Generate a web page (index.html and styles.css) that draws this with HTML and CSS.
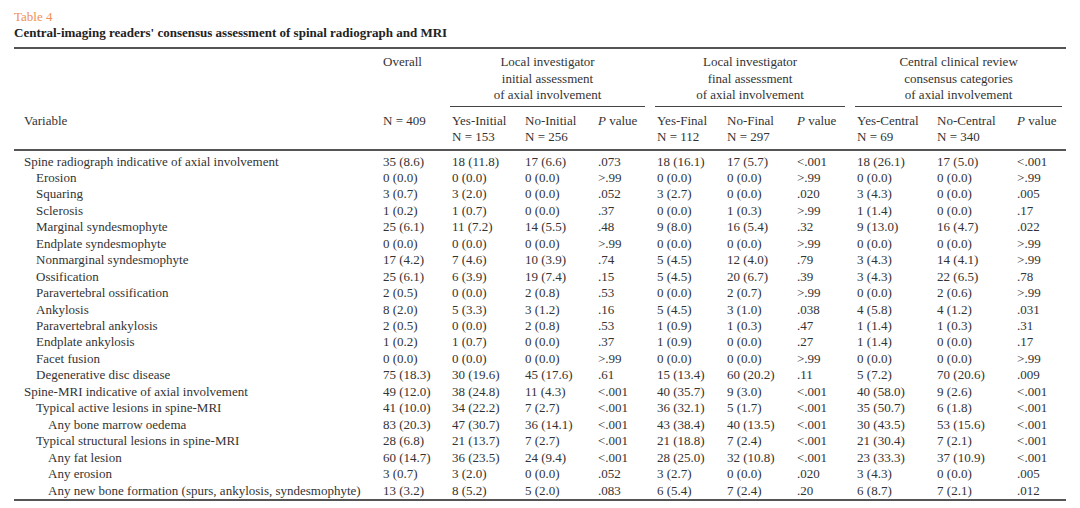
FILE: index.html
```html
<!DOCTYPE html>
<html lang="en">
<head>
<meta charset="utf-8">
<title>Table 4</title>
<link rel="stylesheet" href="styles.css">
</head>
<body>
<div class="caption">
  <div class="label">Table 4</div>
  <div class="title">Central-imaging readers' consensus assessment of spinal radiograph and MRI</div>
</div>
<table class="data">
  <colgroup>
    <col class="c-var"><col class="c-all">
    <col class="c-yi"><col class="c-ni"><col class="c-pi">
    <col class="c-yf"><col class="c-nf"><col class="c-pf">
    <col class="c-yc"><col class="c-nc"><col class="c-pc">
  </colgroup>
  <thead>
    <tr class="h1">
      <th></th>
      <th>Overall</th>
      <th colspan="3" class="grp"><div class="group g1">Local investigator<br>initial assessment<br>of axial involvement</div></th>
      <th colspan="3" class="grp"><div class="group g2">Local investigator<br>final assessment<br>of axial involvement</div></th>
      <th colspan="3" class="grp"><div class="group g3">Central clinical review<br>consensus categories<br>of axial involvement</div></th>
    </tr>
    <tr class="h2">
      <th>Variable</th>
      <th>N = 409</th>
      <th>Yes-Initial<br>N = 153</th>
      <th>No-Initial<br>N = 256</th>
      <th><i>P</i> value</th>
      <th>Yes-Final<br>N = 112</th>
      <th>No-Final<br>N = 297</th>
      <th><i>P</i> value</th>
      <th>Yes-Central<br>N = 69</th>
      <th>No-Central<br>N = 340</th>
      <th><i>P</i> value</th>
    </tr>
  </thead>
  <tbody>
    <tr><td>Spine radiograph indicative of axial involvement</td><td>35 (8.6)</td><td>18 (11.8)</td><td>17 (6.6)</td><td>.073</td><td>18 (16.1)</td><td>17 (5.7)</td><td>&lt;.001</td><td>18 (26.1)</td><td>17 (5.0)</td><td>&lt;.001</td></tr>
    <tr><td class="l1">Erosion</td><td>0 (0.0)</td><td>0 (0.0)</td><td>0 (0.0)</td><td>&gt;.99</td><td>0 (0.0)</td><td>0 (0.0)</td><td>&gt;.99</td><td>0 (0.0)</td><td>0 (0.0)</td><td>&gt;.99</td></tr>
    <tr><td class="l1">Squaring</td><td>3 (0.7)</td><td>3 (2.0)</td><td>0 (0.0)</td><td>.052</td><td>3 (2.7)</td><td>0 (0.0)</td><td>.020</td><td>3 (4.3)</td><td>0 (0.0)</td><td>.005</td></tr>
    <tr><td class="l1">Sclerosis</td><td>1 (0.2)</td><td>1 (0.7)</td><td>0 (0.0)</td><td>.37</td><td>0 (0.0)</td><td>1 (0.3)</td><td>&gt;.99</td><td>1 (1.4)</td><td>0 (0.0)</td><td>.17</td></tr>
    <tr><td class="l1">Marginal syndesmophyte</td><td>25 (6.1)</td><td>11 (7.2)</td><td>14 (5.5)</td><td>.48</td><td>9 (8.0)</td><td>16 (5.4)</td><td>.32</td><td>9 (13.0)</td><td>16 (4.7)</td><td>.022</td></tr>
    <tr><td class="l1">Endplate syndesmophyte</td><td>0 (0.0)</td><td>0 (0.0)</td><td>0 (0.0)</td><td>&gt;.99</td><td>0 (0.0)</td><td>0 (0.0)</td><td>&gt;.99</td><td>0 (0.0)</td><td>0 (0.0)</td><td>&gt;.99</td></tr>
    <tr><td class="l1">Nonmarginal syndesmophyte</td><td>17 (4.2)</td><td>7 (4.6)</td><td>10 (3.9)</td><td>.74</td><td>5 (4.5)</td><td>12 (4.0)</td><td>.79</td><td>3 (4.3)</td><td>14 (4.1)</td><td>&gt;.99</td></tr>
    <tr><td class="l1">Ossification</td><td>25 (6.1)</td><td>6 (3.9)</td><td>19 (7.4)</td><td>.15</td><td>5 (4.5)</td><td>20 (6.7)</td><td>.39</td><td>3 (4.3)</td><td>22 (6.5)</td><td>.78</td></tr>
    <tr><td class="l1">Paravertebral ossification</td><td>2 (0.5)</td><td>0 (0.0)</td><td>2 (0.8)</td><td>.53</td><td>0 (0.0)</td><td>2 (0.7)</td><td>&gt;.99</td><td>0 (0.0)</td><td>2 (0.6)</td><td>&gt;.99</td></tr>
    <tr><td class="l1">Ankylosis</td><td>8 (2.0)</td><td>5 (3.3)</td><td>3 (1.2)</td><td>.16</td><td>5 (4.5)</td><td>3 (1.0)</td><td>.038</td><td>4 (5.8)</td><td>4 (1.2)</td><td>.031</td></tr>
    <tr><td class="l1">Paravertebral ankylosis</td><td>2 (0.5)</td><td>0 (0.0)</td><td>2 (0.8)</td><td>.53</td><td>1 (0.9)</td><td>1 (0.3)</td><td>.47</td><td>1 (1.4)</td><td>1 (0.3)</td><td>.31</td></tr>
    <tr><td class="l1">Endplate ankylosis</td><td>1 (0.2)</td><td>1 (0.7)</td><td>0 (0.0)</td><td>.37</td><td>1 (0.9)</td><td>0 (0.0)</td><td>.27</td><td>1 (1.4)</td><td>0 (0.0)</td><td>.17</td></tr>
    <tr><td class="l1">Facet fusion</td><td>0 (0.0)</td><td>0 (0.0)</td><td>0 (0.0)</td><td>&gt;.99</td><td>0 (0.0)</td><td>0 (0.0)</td><td>&gt;.99</td><td>0 (0.0)</td><td>0 (0.0)</td><td>&gt;.99</td></tr>
    <tr><td class="l1">Degenerative disc disease</td><td>75 (18.3)</td><td>30 (19.6)</td><td>45 (17.6)</td><td>.61</td><td>15 (13.4)</td><td>60 (20.2)</td><td>.11</td><td>5 (7.2)</td><td>70 (20.6)</td><td>.009</td></tr>
    <tr><td>Spine-MRI indicative of axial involvement</td><td>49 (12.0)</td><td>38 (24.8)</td><td>11 (4.3)</td><td>&lt;.001</td><td>40 (35.7)</td><td>9 (3.0)</td><td>&lt;.001</td><td>40 (58.0)</td><td>9 (2.6)</td><td>&lt;.001</td></tr>
    <tr><td class="l1">Typical active lesions in spine-MRI</td><td>41 (10.0)</td><td>34 (22.2)</td><td>7 (2.7)</td><td>&lt;.001</td><td>36 (32.1)</td><td>5 (1.7)</td><td>&lt;.001</td><td>35 (50.7)</td><td>6 (1.8)</td><td>&lt;.001</td></tr>
    <tr><td class="l2">Any bone marrow oedema</td><td>83 (20.3)</td><td>47 (30.7)</td><td>36 (14.1)</td><td>&lt;.001</td><td>43 (38.4)</td><td>40 (13.5)</td><td>&lt;.001</td><td>30 (43.5)</td><td>53 (15.6)</td><td>&lt;.001</td></tr>
    <tr><td class="l1">Typical structural lesions in spine-MRI</td><td>28 (6.8)</td><td>21 (13.7)</td><td>7 (2.7)</td><td>&lt;.001</td><td>21 (18.8)</td><td>7 (2.4)</td><td>&lt;.001</td><td>21 (30.4)</td><td>7 (2.1)</td><td>&lt;.001</td></tr>
    <tr><td class="l2">Any fat lesion</td><td>60 (14.7)</td><td>36 (23.5)</td><td>24 (9.4)</td><td>&lt;.001</td><td>28 (25.0)</td><td>32 (10.8)</td><td>&lt;.001</td><td>23 (33.3)</td><td>37 (10.9)</td><td>&lt;.001</td></tr>
    <tr><td class="l2">Any erosion</td><td>3 (0.7)</td><td>3 (2.0)</td><td>0 (0.0)</td><td>.052</td><td>3 (2.7)</td><td>0 (0.0)</td><td>.020</td><td>3 (4.3)</td><td>0 (0.0)</td><td>.005</td></tr>
    <tr><td class="l2">Any new bone formation (spurs, ankylosis, syndesmophyte)</td><td>13 (3.2)</td><td>8 (5.2)</td><td>5 (2.0)</td><td>.083</td><td>6 (5.4)</td><td>7 (2.4)</td><td>.20</td><td>6 (8.7)</td><td>7 (2.1)</td><td>.012</td></tr>
  </tbody>
</table>
</body>
</html>
```

FILE: styles.css
```css
html, body {
  margin: 0;
  padding: 0;
  background: #ffffff;
}
body {
  padding: 9px 14px 0 14px;
  font-family: "Liberation Serif", "Times New Roman", serif;
  font-size: 13px;
  color: #333333;
}
.caption {
  margin-bottom: 6px;
}
.label {
  color: #ef8f55;
  line-height: 16px;
}
.title {
  font-weight: bold;
  color: #222222;
  line-height: 16px;
}
.data {
  width: 1052px;
  table-layout: fixed;
  border-collapse: collapse;
  border-top: 2px solid #555555;
  border-bottom: 2px solid #555555;
}
.c-var { width: 359px; }
.c-all { width: 69px; }
.c-yi { width: 73px; }
.c-ni { width: 73px; }
.c-pi { width: 59px; }
.c-yf { width: 70px; }
.c-nf { width: 70px; }
.c-pf { width: 60px; }
.c-yc { width: 80px; }
.c-nc { width: 80px; }
.c-pc { width: 59px; }

.data th {
  font-weight: normal;
  text-align: left;
  vertical-align: top;
  padding: 0 0 0 10px;
  line-height: 16.5px;
  white-space: nowrap;
}
.data th i {
  font-style: italic;
}
.h1 th {
  padding-top: 5px;
}
.h1 th.grp {
  padding-left: 8px;
  padding-right: 0;
}
.group {
  text-align: center;
  border-bottom: 1px solid #444444;
  padding-bottom: 2px;
  margin-right: 2px;
}
.group.g3 {
  margin-right: 4px;
}
.h2 th {
  padding-top: 6px;
  padding-bottom: 3px;
  border-bottom: 2px solid #555555;
}
.data td {
  padding: 0 0 0 10px;
  line-height: 16.45px;
  white-space: nowrap;
}
.data tbody tr:first-child td {
  padding-top: 3px;
}
.data td.l1 {
  padding-left: 22px;
}
.data td.l2 {
  padding-left: 34px;
}
```
